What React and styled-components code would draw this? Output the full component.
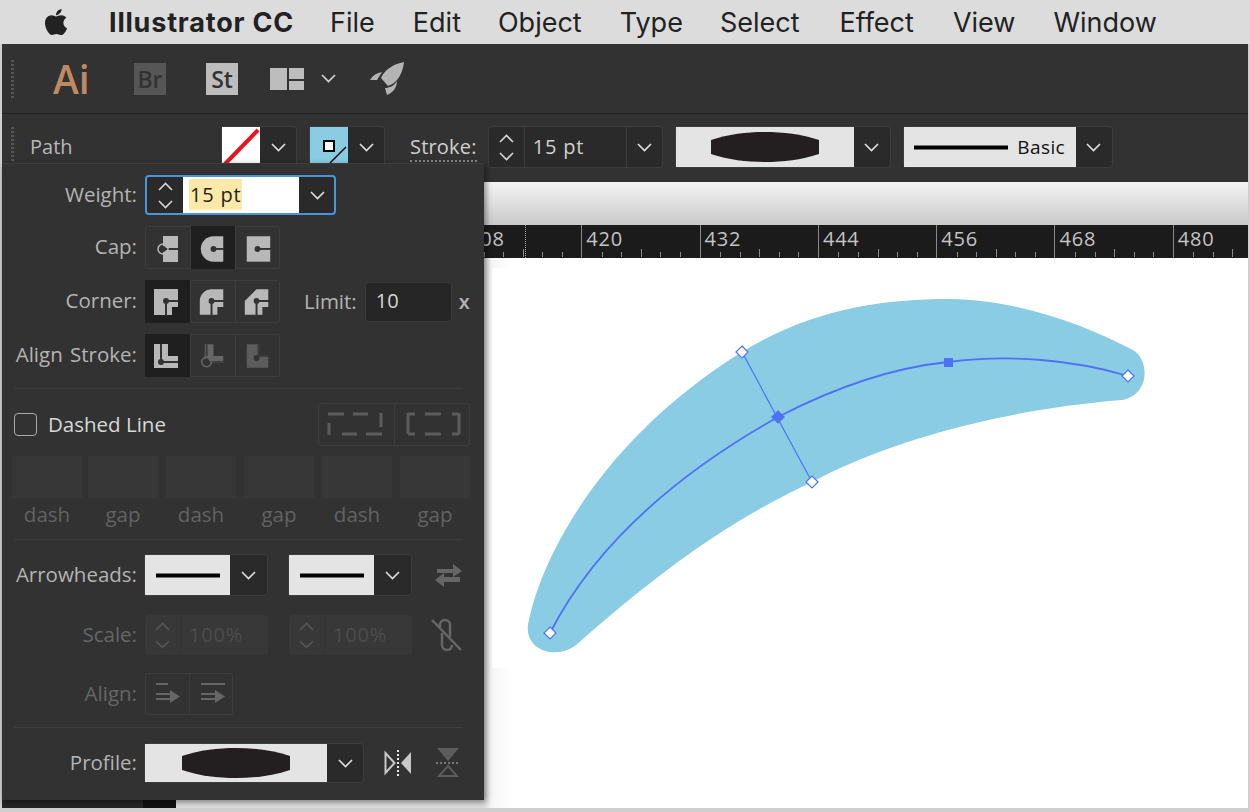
import React from 'react';
import styled, { createGlobalStyle } from 'styled-components';
import { FaApple } from 'react-icons/fa';

const GlobalStyle = createGlobalStyle`
	html, body {
		margin: 0;
		padding: 0;
		background: #cfcfcf;
	}
`;

const Page = styled.div`
	position: relative;
	width: 1250px;
	height: 812px;
	box-sizing: border-box;
	padding: 0 2px 2px;
	overflow: hidden;
	background: #cfcfcf;
	font-family: 'Open Sans', 'Liberation Sans', sans-serif;
`;

const MenuBar = styled.div`
	display: flex;
	align-items: center;
	height: 44px;
	margin: 0 -2px;
	padding-left: 41px;
	background: #dcdcdc;
	color: #222;
	font-family: Inter, 'Liberation Sans', sans-serif;
	font-size: 27px;
`;

const AppName = styled.span`
	margin-left: 38px;
	margin-right: 36px;
	font-weight: 700;
	letter-spacing: 0.8px;
`;

const MenuItem = styled.span`
	margin-right: ${(p) => p.$gap}px;
`;

const AppBar = styled.div`
	display: flex;
	align-items: center;
	height: 70px;
	padding-left: 9px;
	background: #323232;
	border-bottom: 1px solid #222;
	box-sizing: border-box;
`;

const Grip = styled.div`
	width: 3px;
	height: 38px;
	background: repeating-linear-gradient(to bottom, #555 0 2px, transparent 2px 4px);
`;

const AiLogo = styled.span`
	margin-left: 39px;
	width: 81px;
	color: #bf8a63;
	font-size: 39px;
	font-weight: 600;
	line-height: 1;
`;

const AppTile = styled.span`
	display: flex;
	align-items: center;
	justify-content: center;
	width: 32px;
	height: 32px;
	margin-right: 40px;
	background: ${(p) => (p.$on ? '#bdbdbd' : '#565656')};
	color: #333;
	font-size: 23px;
	font-weight: 600;
`;

const IconSvg = styled.svg`
	display: block;
	flex: none;
	margin-left: ${(p) => p.$ml || 0}px;
`;

const ControlBar = styled.div`
	display: flex;
	align-items: flex-start;
	height: 68px;
	padding: 13px 0 0 9px;
	background: #323232;
	box-sizing: border-box;
`;

const PathLabel = styled.span`
	width: 192px;
	margin-left: 16px;
	color: #b8b8b8;
	font-size: 20px;
	line-height: 40px;
`;

const Combo = styled.div`
	display: flex;
	flex: none;
	height: ${(p) => p.$h || 40}px;
	margin-left: ${(p) => p.$ml || 0}px;
	background: ${(p) => (p.$off ? '#383838' : '#2a2a2a')};
	border-radius: 3px;
	box-shadow: ${(p) => (p.$off ? 'none' : '0 0 0 1px #3c3c3c')};
`;

const Swatch = styled.div`
	display: flex;
	align-items: center;
	justify-content: center;
	flex: none;
	position: relative;
	width: ${(p) => p.$w}px;
	background: ${(p) => p.$bg || '#e4e4e4'};
	color: #111;
	font-size: 19px;
	overflow: hidden;
`;

const BasicText = styled.span`
	margin-left: 9px;
	letter-spacing: 0.4px;
`;

const ChevronBox = styled.div`
	display: flex;
	align-items: center;
	justify-content: center;
	flex: none;
	width: ${(p) => p.$w || 36}px;
	color: #e0e0e0;
	border-left: ${(p) => (p.$line ? '1px solid #3c3c3c' : 'none')};
	box-sizing: border-box;
`;

const SpinBox = styled.div`
	display: flex;
	flex-direction: column;
	align-items: center;
	justify-content: center;
	gap: 9px;
	flex: none;
	width: 36px;
	color: ${(p) => (p.$off ? '#555' : '#d6d6d6')};
	border-right: ${(p) => (p.$line ? `1px solid ${p.$off ? '#333' : '#3c3c3c'}` : 'none')};
	box-sizing: border-box;
`;

const ValueBox = styled.div`
	flex: none;
	width: ${(p) => p.$w}px;
	padding-left: ${(p) => p.$pl || 8}px;
	box-sizing: border-box;
	background: ${(p) => p.$bg || 'transparent'};
	color: ${(p) => p.$c || '#d0d0d0'};
	font-size: 20px;
	line-height: ${(p) => p.$lh || 40}px;
	letter-spacing: 0.8px;
`;

const StrokeLabel = styled.span`
	margin-left: 26px;
	margin-top: 7px;
	height: 26px;
	color: #d0d0d0;
	font-size: 20px;
	line-height: 25px;
	letter-spacing: 0.2px;
	border-bottom: 2px dotted #888;
`;

const Workspace = styled.div`
	background: #fff;
`;

const TabStrip = styled.div`
	height: 43px;
	background: linear-gradient(to bottom, #f4f4f4, #c9c9c9);
`;

const Ruler = styled.div`
	position: relative;
	display: flex;
	height: 33px;
	padding-left: 461px;
	background: #1b1b1b;
	overflow: hidden;
`;

const RulerCursor = styled.span`
	position: absolute;
	left: 523px;
	top: 0;
	bottom: 0;
	border-left: 1px dotted #aaa;
`;

const RulerCell = styled.div`
	flex: none;
	width: 118.3px;
	box-sizing: border-box;
	border-left: 1px solid #8a8a8a;
	padding-left: 4px;
	position: relative;
	color: #c4c4c4;
	font-size: 20px;
	line-height: 27px;
	letter-spacing: 0.8px;
`;

const RulerTicks = styled.div`
	position: absolute;
	left: 0;
	right: 0;
	bottom: 1px;
	display: grid;
	grid-template-columns: repeat(6, 1fr);
	align-items: end;
	height: 8px;
`;

const Tick = styled.span`
	height: ${(p) => (p.$long ? 8 : 5)}px;
	border-left: ${(p) => (p.$hide ? 'none' : '1px solid #8a8a8a')};
`;

const Canvas = styled.div`
	position: relative;
	height: 550px;
	padding: 10px 0 0 490px;
	box-sizing: border-box;
	background: linear-gradient(to right, #dedede 482px, #f6f6f6 490px, #fff 510px);
`;

const Artboard = styled.div`
	height: 400px;
	background: #fff;
`;

const BottomStrip = styled.div`
	position: absolute;
	left: 0;
	bottom: 0;
	width: 174px;
	height: 10px;
	background: linear-gradient(to right, #262626 141px, #111 141px);
`;

const StrokePanel = styled.div`
	position: absolute;
	left: 2px;
	top: 163px;
	width: 482px;
	height: 637px;
	box-sizing: border-box;
	padding-top: 11px;
	background: #323232;
	border-top: 1px solid #3e3e3e;
	box-shadow: 2px 2px 6px rgba(0, 0, 0, 0.45);
`;

const PanelRow = styled.div`
	display: flex;
	align-items: center;
	height: ${(p) => p.$h}px;
	margin-top: ${(p) => p.$mt || 0}px;
`;

const FieldLabel = styled.span`
	flex: none;
	width: 135px;
	margin-right: 8px;
	padding-bottom: 2px;
	text-align: right;
	white-space: nowrap;
	word-spacing: 2px;
	color: ${(p) => (p.$off ? '#666' : '#b4b4b4')};
	font-size: 20.5px;
	font-weight: 500;
	line-height: 1;
`;

const FocusCombo = styled.div`
	display: flex;
	height: 40px;
	width: 191px;
	box-sizing: border-box;
	border: 2px solid #4a94dc;
	border-radius: 4px;
	background: #2a2a2a;
`;

const Highlight = styled.span`
	padding: 2px 1px;
	background: #fce9a9;
	color: #222;
`;

const ButtonGroup = styled.div`
	display: flex;
	height: ${(p) => p.$h || 43}px;
	border-radius: 3px;
	box-shadow: inset 0 0 0 1px #3d3d3d;
`;

const GroupButton = styled.div`
	display: flex;
	align-items: center;
	justify-content: center;
	flex: none;
	width: ${(p) => p.$w || 45}px;
	background: ${(p) => (p.$on ? '#1f1f1f' : 'transparent')};
	color: ${(p) => p.$fg || '#b8b8b8'};
	border-left: ${(p) => (p.$first ? 'none' : '1px solid #3d3d3d')};
	box-sizing: border-box;
`;

const LimitLabel = styled.span`
	margin-left: 24px;
	padding-bottom: 2px;
	color: #b4b4b4;
	font-size: 20.5px;
	font-weight: 500;
`;

const LimitField = styled.div`
	width: 85px;
	height: 38px;
	margin-left: 9px;
	padding-left: 10px;
	box-sizing: border-box;
	border-radius: 3px;
	background: #262626;
	box-shadow: 0 0 0 1px #3a3a3a;
	color: #d6d6d6;
	font-size: 20px;
	line-height: 36px;
`;

const Unit = styled.span`
	margin-left: 8px;
	color: #b4b4b4;
	font-size: 20px;
	font-weight: 600;
`;

const Divider = styled.div`
	height: 1px;
	margin: ${(p) => p.$mt}px 22px 0 12px;
	background: #3d3d3d;
`;

const CheckBox = styled.span`
	width: 23px;
	height: 23px;
	margin-left: 12px;
	border: 1px solid #aaa;
	border-radius: 4px;
	box-sizing: border-box;
`;

const CheckLabel = styled.span`
	width: 270px;
	margin-left: 11px;
	color: #d8d8d8;
	font-size: 20.5px;
	font-weight: 500;
`;

const DashGrid = styled.div`
	display: grid;
	grid-template-columns: 66px repeat(5, 70px);
	column-gap: 8px;
	margin: 11px 0 0 12px;
`;

const DashCell = styled.div`
	height: 42px;
	background: #373737;

	&:first-child {
		margin: 0 -2px;
	}
`;

const DashName = styled.span`
	height: 32px;
	text-align: center;
	color: #626262;
	font-size: 20.5px;
	font-weight: 500;
	line-height: 32px;
`;

const Chevron = ({ up }) => (
	<svg width='15' height='9' viewBox='0 0 15 9' fill='none' stroke='currentColor' strokeWidth='1.6'>
		<path d={up ? 'M1 8l6.5-6.5L14 8' : 'M1 1l6.5 6.5L14 1'} />
	</svg>
);

// Stroke profile lens, same drawing in the bar and in the panel
const ProfileLens = ({ w, h }) => (
	<svg width={w} height={h} viewBox='0 0 108 30'>
		<path
			d='M0 8C18 2 36 0 54 0s36 2 54 8v14c-18 6-36 8-54 8s-36-2-54-8z'
			fill='#231f20'
		/>
	</svg>
);

const LineSample = ({ w }) => <svg width={w} height='5'><rect width={w} height='4' y='0.5' fill='#000' /></svg>;

const dark = '#333';

const Dot = ({ x, y, ring }) => (
	<>
		{ring && <circle cx={x} cy={y} r='5' fill='none' stroke={ring} strokeWidth='1.5' />}
		<circle cx={x} cy={y} r='3' fill={dark} />
	</>
);

const JoinGlyph = ({ shape, x, y, lines, ring, bg }) => (
	<svg width='45' height='43' viewBox='0 0 45 43' fill='none'>
		<path d={shape} fill='currentColor' />
		<path d={lines} stroke={bg || dark} strokeWidth='2' />
		<Dot x={x} y={y} ring={ring} />
	</svg>
);

const capButtons = [
	{ shape: 'M18 10h15v26H18z', lines: 'M18 23h16', x: 18, y: 23, ring: '#b8b8b8' },
	{ shape: 'M33 10H23a13 13 0 0 0 0 26h10z', lines: 'M23 23h11', x: 23, y: 23, on: true },
	{ shape: 'M11 10h24v26H11z', lines: 'M22 23h14', x: 22, y: 23 }
];

const cornerButtons = [
	{ shape: 'M9 9h24v18h-6v8H9z', lines: 'M21 21h13M21 21v15', x: 21, y: 21, on: true },
	{ shape: 'M9 35V21A12 12 0 0 1 21 9h12v18h-6v8z', lines: 'M21 21h13M21 21v15', x: 21, y: 21 },
	{ shape: 'M9 35V21L21 9h12v18h-6v8z', lines: 'M21 21h13M21 21v15', x: 21, y: 21 }
];

const alignButtons = [
	{ shape: 'M9 10h14v12h10v12H9z', lines: 'M16 10v18M16 28h17', x: 16, y: 28, on: true },
	{ shape: 'M14 10h9v12h10v7H14z', lines: 'M16 10v18M16 28h17', x: 16, y: 28, ring: '#666', fg: '#666', bg: '#3d3d3d' },
	{ shape: 'M11 10h12v12h10v12H11z', lines: 'M23 10v12M23 22h10', x: 21, y: 24, fg: '#5c5c5c', bg: '#3d3d3d' }
];

const GlyphGroup = ({ items }) => (
	<ButtonGroup>
		{items.map((item, i) => (
			<GroupButton key={i} $first={i === 0} $on={item.on} $fg={item.fg}>
				<JoinGlyph {...item} />
			</GroupButton>
		))}
	</ButtonGroup>
);

const DashIcon = ({ variant }) => (
	<svg width='58' height='26' viewBox='0 0 58 26' fill='none' stroke='#5c5c5c' strokeWidth='3'>
		{variant === 0 ? (
			<path d='M1 3h16M26 3h15M54 2v14M2 12v12M15 23h15M39 23h16' />
		) : (
			<path d='M4 2v21M4 3h7M4 23h7M21 3h16M21 23h16M55 2v21M55 3h-7M55 23h-7' />
		)}
	</svg>
);

const ArrowSwatch = ({ ml }) => (
	<Combo $ml={ml}>
		<Swatch $w={85}>
			<LineSample w={64} />
		</Swatch>
		<ChevronBox $w={37}>
			<Chevron />
		</ChevronBox>
	</Combo>
);

const ScaleField = ({ ml }) => (
	<Combo $ml={ml} $off>
		<SpinBox $off $line>
			<Chevron up />
			<Chevron />
		</SpinBox>
		<ValueBox $w={87} $c='#4c4c4c'>100%</ValueBox>
	</Combo>
);

const AlignGlyph = ({ top }) => (
	<svg width='26' height='24' viewBox='0 0 26 24' fill='none' stroke='currentColor' strokeWidth='2'>
		<path d={`${top}M2 12h18M2 17h18`} />
		<path d='M16 8l10 6.5-10 6.5z' fill='currentColor' stroke='none' />
	</svg>
);

const rulerMarks = [408, 420, 432, 444, 456, 468, 480];

const Ruling = () => (
	<Ruler>
		<RulerCursor />
		{rulerMarks.map((mark) => (
			<RulerCell key={mark}>
				{mark}
				<RulerTicks>
					{[0, 1, 2, 3, 4, 5].map((n) => (
						<Tick key={n} $hide={n === 0} $long={n === 3} />
					))}
				</RulerTicks>
			</RulerCell>
		))}
	</Ruler>
);

const Anchor = ({ x, y, fill }) => (
	<path
		d={`M${x} ${y - 6}l6 6-6 6-6-6z`}
		fill={fill || '#fff'}
		stroke='#4d72f5'
		strokeWidth='1.2'
	/>
);

const Banana = () => (
	<IconSvg width='756' height='400' viewBox='492 268 756 400'>
		<path
			d='M528 625C540 560 600 440 742 352C810 310 880 299 950 299C1020 300 1085 325 1133 350C1150 360 1150 395 1122 400C1020 408 900 435 812 482C720 525 650 580 575 646C555 660 525 650 528 625Z'
			fill='#89cce4'
		/>
		<path d='M742 352L812 482' stroke='#4d72f5' strokeWidth='1.2' fill='none' />
		<path
			d='M550 633C595 545 675 475 778 417C830 390 890 368 948 362C1010 354 1075 360 1128 376'
			stroke='#4d72f5'
			strokeWidth='1.8'
			fill='none'
		/>
		<Anchor x={742} y={352} />
		<Anchor x={812} y={482} />
		<Anchor x={550} y={633} />
		<Anchor x={1128} y={376} />
		<Anchor x={778} y={417} fill='#4d72f5' />
		<rect x='944' y='358' width='9' height='9' fill='#4d72f5' />
	</IconSvg>
);

const menuItems = [
	['File', 38],
	['Edit', 37],
	['Object', 38],
	['Type', 37],
	['Select', 40],
	['Effect', 39],
	['View', 38],
	['Window', 0]
];

const App = () => (
	<Page>
		<GlobalStyle />
		<MenuBar>
			<FaApple size={30} color='#222' />
			<AppName>Illustrator CC</AppName>
			{menuItems.map(([label, gap]) => (
				<MenuItem key={label} $gap={gap}>{label}</MenuItem>
			))}
		</MenuBar>

		<AppBar>
			<Grip />
			<AiLogo>Ai</AiLogo>
			<AppTile>Br</AppTile>
			<AppTile $on>St</AppTile>
			<IconSvg width='34' height='22' viewBox='0 0 34 22' $ml={-8}>
				<path d='M0 0h17v22H0zM19 0h15v11H19zM19 13h15v9H19z' fill='#bdbdbd' />
			</IconSvg>
			<IconSvg width='15' height='9' viewBox='0 0 15 9' fill='none' stroke='#d6d6d6' strokeWidth='1.6' $ml={17}>
				<path d='M1 1l6.5 6.5L14 1' />
			</IconSvg>
			<IconSvg width='34' height='34' viewBox='0 0 34 34' fill='#b4b4b4' $ml={34}>
				<path d='M34 0C24 2 15 7 11 16l7 8C28 21 33 10 34 0zM0 18c3-5 7-7 12-8l-5 8zM17 33l-2-7c4 0 9-2 12-7 0 6-4 12-10 14z' />
			</IconSvg>
		</AppBar>

		<ControlBar>
			<Grip />
			<PathLabel>Path</PathLabel>
			<Combo>
				<Swatch $w={38} $bg='#fff'>
					<svg width='38' height='40' viewBox='0 0 38 40'>
						<path d='M2 38L36 3' stroke='#e8141c' strokeWidth='4' />
					</svg>
				</Swatch>
				<ChevronBox>
					<Chevron />
				</ChevronBox>
			</Combo>
			<Combo $ml={14}>
				<Swatch $w={38} $bg='#89cce4'>
					<svg width='38' height='40' viewBox='0 0 38 40'>
						<path d='M20 36L36 20' stroke='#000' strokeWidth='1.5' />
						<rect x='14' y='14' width='10' height='10' fill='#fff' stroke='#000' strokeWidth='2' />
					</svg>
				</Swatch>
				<ChevronBox>
					<Chevron />
				</ChevronBox>
			</Combo>
			<StrokeLabel>Stroke:</StrokeLabel>
			<Combo $ml={12}>
				<SpinBox $line>
					<Chevron up />
					<Chevron />
				</SpinBox>
				<ValueBox $w={101}>15 pt</ValueBox>
				<ChevronBox $line>
					<Chevron />
				</ChevronBox>
			</Combo>
			<Combo $ml={14}>
				<Swatch $w={178}>
					<ProfileLens w={110} h={30} />
				</Swatch>
				<ChevronBox>
					<Chevron />
				</ChevronBox>
			</Combo>
			<Combo $ml={14}>
				<Swatch $w={172}>
					<LineSample w={94} />
					<BasicText>Basic</BasicText>
				</Swatch>
				<ChevronBox>
					<Chevron />
				</ChevronBox>
			</Combo>
		</ControlBar>

		<Workspace>
			<TabStrip />
			<Ruling />
			<Canvas>
				<Artboard>
					<Banana />
				</Artboard>
				<BottomStrip />
			</Canvas>
		</Workspace>

		<StrokePanel>
			<PanelRow $h={40}>
				<FieldLabel>Weight:</FieldLabel>
				<FocusCombo>
					<SpinBox>
						<Chevron up />
						<Chevron />
					</SpinBox>
					<ValueBox $w={116} $pl={6} $bg='#fff' $c='#222' $lh={36}>
						<Highlight>15 pt</Highlight>
					</ValueBox>
					<ChevronBox>
						<Chevron />
					</ChevronBox>
				</FocusCombo>
			</PanelRow>
			<PanelRow $h={43} $mt={11}>
				<FieldLabel>Cap:</FieldLabel>
				<GlyphGroup items={capButtons} />
			</PanelRow>
			<PanelRow $h={43} $mt={11}>
				<FieldLabel>Corner:</FieldLabel>
				<GlyphGroup items={cornerButtons} />
				<LimitLabel>Limit:</LimitLabel>
				<LimitField>10</LimitField>
				<Unit>x</Unit>
			</PanelRow>
			<PanelRow $h={43} $mt={11}>
				<FieldLabel>Align Stroke:</FieldLabel>
				<GlyphGroup items={alignButtons} />
			</PanelRow>
			<Divider $mt={11} />
			<PanelRow $h={42} $mt={14}>
				<CheckBox />
				<CheckLabel>Dashed Line</CheckLabel>
				<ButtonGroup>
					<GroupButton $first $w={76}><DashIcon variant={0} /></GroupButton>
					<GroupButton $w={76}><DashIcon variant={1} /></GroupButton>
				</ButtonGroup>
			</PanelRow>
			<DashGrid>
				{[0, 1, 2, 3, 4, 5].map((n) => <DashCell key={n} />)}
				{['dash', 'gap', 'dash', 'gap', 'dash', 'gap'].map((name, n) => (
					<DashName key={n}>{name}</DashName>
				))}
			</DashGrid>
			<Divider $mt={9} />
			<PanelRow $h={40} $mt={15}>
				<FieldLabel>Arrowheads:</FieldLabel>
				<ArrowSwatch />
				<ArrowSwatch ml={22} />
				<IconSvg width='27' height='26' viewBox='0 0 27 26' fill='#666' $ml={24}>
					<path d='M2 7h16V2l9 7-9 6v-4H2zM25 15H9v-4l-9 7 9 7v-5h16z' />
				</IconSvg>
			</PanelRow>
			<PanelRow $h={40} $mt={20}>
				<FieldLabel $off>Scale:</FieldLabel>
				<ScaleField />
				<ScaleField ml={21} />
				<IconSvg width='32' height='34' viewBox='0 0 32 34' fill='none' stroke='#666' strokeWidth='2.5' $ml={18}>
					<path d='M10 9V7a5 5 0 0 1 10 0v12M22 27a5 5 0 0 1-10 0V15M2 2l29 30' />
				</IconSvg>
			</PanelRow>
			<PanelRow $h={42} $mt={18}>
				<FieldLabel $off>Align:</FieldLabel>
				<ButtonGroup $h={42}>
					<GroupButton $first $w={44} $fg='#666'>
						<AlignGlyph top='M2 2h12' />
					</GroupButton>
					<GroupButton $w={44} $fg='#666'>
						<AlignGlyph top='M2 2h24' />
					</GroupButton>
				</ButtonGroup>
			</PanelRow>
			<Divider $mt={12} />
			<PanelRow $h={38} $mt={16}>
				<FieldLabel>Profile:</FieldLabel>
				<Combo $h={38}>
					<Swatch $w={182}>
						<ProfileLens w={110} h={30} />
					</Swatch>
					<ChevronBox>
						<Chevron />
					</ChevronBox>
				</Combo>
				<IconSvg width='28' height='26' viewBox='0 0 28 26' fill='none' $ml={21}>
					<path d='M1.5 3l9 10-9 10z' stroke='#c8c8c8' strokeWidth='2' />
					<path d='M27 2L17 13l10 11z' fill='#c8c8c8' />
					<path d='M14 0v26' stroke='#e8e8e8' strokeWidth='2' strokeDasharray='2 2' />
				</IconSvg>
				<IconSvg width='24' height='30' viewBox='0 0 24 30' fill='none' $ml={24}>
					<path d='M1 0h22L12 13z' fill='#5c5c5c' />
					<path d='M3 28L12 18l9 10z' stroke='#5c5c5c' strokeWidth='2' />
					<path d='M0 15h24' stroke='#777' strokeWidth='2' strokeDasharray='2 2' />
				</IconSvg>
			</PanelRow>
		</StrokePanel>
	</Page>
);

export default App;
